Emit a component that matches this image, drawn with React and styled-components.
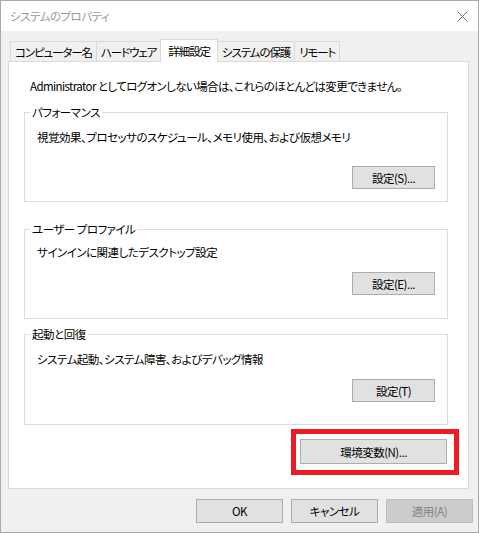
import React from "react";
import styled, { createGlobalStyle } from "styled-components";

const GlobalStyle = createGlobalStyle`
  html, body {
    margin: 0;
    padding: 0;
    background: #ffffff;
  }
  body {
    font-family: "Noto Sans CJK JP", "Noto Sans", sans-serif;
    font-size: 11.5px;
    letter-spacing: -0.5px;
    color: #000;
    font-feature-settings: "palt";
  }
`;

const tabs = ["コンピューター名", "ハードウェア", "詳細設定", "システムの保護", "リモート"];

const groups = [
  {
    title: "パフォーマンス",
    text: "視覚効果、プロセッサのスケジュール、メモリ使用、および仮想メモリ",
    button: "設定(S)...",
    space: { top: 10, text: 9, button: 21, bottom: 12 },
  },
  {
    title: "ユーザー プロファイル",
    text: "サインインに関連したデスクトップ設定",
    button: "設定(E)...",
    space: { top: 19, text: 7, button: 12, bottom: 23 },
  },
  {
    title: "起動と回復",
    text: "システム起動、システム障害、およびデバッグ情報",
    button: "設定(T)",
    space: { top: 7, text: 9, button: 12, bottom: 22 },
  },
];

const CloseIcon = () => (
  <svg width="11" height="11" viewBox="0 0 11 11">
    <path d="M0.5 0.5 L10.5 10.5 M10.5 0.5 L0.5 10.5" stroke="#6f6f6f" strokeWidth="1" fill="none" />
  </svg>
);

const App = () => {
  return (
    <>
      <GlobalStyle />
      <Window>
        <TitleBar>
          <Title>システムのプロパティ</Title>
          <CloseIcon />
        </TitleBar>
        <Body>
          <TabStrip>
            {tabs.map((t) => (
              <Tab key={t} $active={t === "詳細設定"}>
                {t}
              </Tab>
            ))}
          </TabStrip>
          <Panel>
            <Notice>
              Administrator としてログオンしない場合は、これらのほとんどは変更できません。
            </Notice>
            {groups.map((g) => (
              <Group key={g.title} $space={g.space}>
                <Legend>{g.title}</Legend>
                <GroupText $gap={g.space.text}>{g.text}</GroupText>
                <GroupButton $gap={g.space.button}>{g.button}</GroupButton>
              </Group>
            ))}
            <EnvRow>
              <Highlight>
                <EnvButton>環境変数(N)...</EnvButton>
              </Highlight>
            </EnvRow>
          </Panel>
          <Footer>
            <Button>OK</Button>
            <Button>キャンセル</Button>
            <Button disabled>適用(A)</Button>
          </Footer>
        </Body>
      </Window>
    </>
  );
};

const Window = styled.div`
  width: 479px;
  height: 533px;
  box-sizing: border-box;
  border: 1px solid #a9a9a9;
  display: flex;
  flex-direction: column;
  overflow: hidden;
`;
const TitleBar = styled.div`
  height: 30px;
  flex: none;
  background: #ffffff;
  display: flex;
  align-items: center;
  justify-content: space-between;
  padding: 0 10px 0 9px;
`;
const Title = styled.div`
  color: #999999;
`;
const Body = styled.div`
  flex: 1;
  background: #f0f0f0;
  padding: 8px 0 0 7px;
  display: flex;
  flex-direction: column;
`;
const TabStrip = styled.div`
  display: flex;
  align-items: flex-end;
  height: 22px;
  padding-left: 3px;
`;
const Tab = styled.div`
  position: relative;
  box-sizing: border-box;
  height: ${(p) => (p.$active ? "23px" : "20px")};
  margin-bottom: ${(p) => (p.$active ? "-1px" : "0")};
  margin-left: -1px;
  padding: 0 ${(p) => (p.$active ? "7px" : "4px")};
  border: 1px solid #d9d9d9;
  border-bottom: none;
  background: ${(p) => (p.$active ? "#ffffff" : "#f0f0f0")};
  z-index: ${(p) => (p.$active ? 2 : 1)};
  display: flex;
  align-items: center;
  line-height: 16px;
  letter-spacing: -1.1px;
  white-space: nowrap;
`;
const Panel = styled.div`
  width: 461px;
  height: 428px;
  box-sizing: border-box;
  background: #ffffff;
  border: 1px solid #d9d9d9;
  padding: 16px 20px 0 15px;
  display: flex;
  flex-direction: column;
`;
const Notice = styled.div`
  line-height: 16px;
  margin-left: 6px;
  letter-spacing: -0.6px;
  white-space: nowrap;
`;
const Group = styled.fieldset`
  margin: ${(p) => p.$space.top}px 0 0 0;
  padding: 0 12px ${(p) => p.$space.bottom}px 12px;
  min-width: 0;
  border: 1px solid #dcdcdc;
  display: flex;
  flex-direction: column;
`;
const Legend = styled.legend`
  margin-left: -7px;
  padding: 0 2px;
  line-height: 16px;
`;
const GroupText = styled.div`
  margin-top: ${(p) => p.$gap}px;
  line-height: 16px;
`;
const BaseButton = styled.button`
  font-family: inherit;
  font-size: inherit;
  letter-spacing: inherit;
  font-feature-settings: "palt";
  color: #000;
  background: #e1e1e1;
  border: 1px solid #adadad;
  border-radius: 0;
  padding: 0;
  box-sizing: border-box;
  &:disabled {
    background: #cccccc;
    border-color: #bfbfbf;
    color: #838383;
  }
`;
const GroupButton = styled(BaseButton)`
  align-self: flex-end;
  width: 83px;
  height: 23px;
  margin-top: ${(p) => p.$gap}px;
`;
const EnvRow = styled.div`
  display: flex;
  justify-content: flex-end;
  margin: 4px -11px 0 0;
`;
const Highlight = styled.div`
  border: 5px solid #ed1c24;
  padding: 5px 7px 6px 4px;
  background: #ffffff;
`;
const EnvButton = styled(BaseButton)`
  display: block;
  width: 147px;
  height: 25px;
`;
const Footer = styled.div`
  display: flex;
  justify-content: flex-end;
  gap: 8px;
  margin-top: 10px;
  padding-right: 5px;
`;
const Button = styled(BaseButton)`
  width: 87px;
  height: 24px;
`;

export default App;
